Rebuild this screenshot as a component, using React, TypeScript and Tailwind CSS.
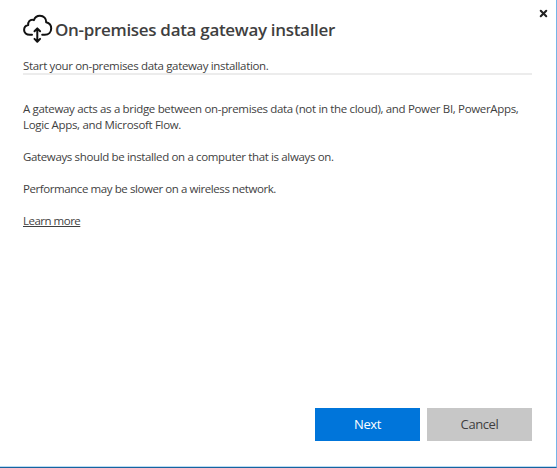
import { X } from 'lucide-react';

function CloudGatewayIcon() {
  return (
    <svg width="30" height="30" viewBox="0 0 30 30" fill="none" stroke="#111" strokeWidth="2" strokeLinecap="round" strokeLinejoin="round">
      <path d="M9 20.800H6.800C3.400 20.800 1.100 18.800 1.100 15.900c0-2.700 1.700-4.400 4.100-4.900C4.900 7.800 6.900 5.600 9.600 5.800c.5 0 .9.1 1.300.3C11.900 3.300 14.100 1.700 16.900 1.700c3.900 0 6.500 2.800 6.300 6.600 3.100.8 5 3 5 6.200 0 3.700-2.600 6.300-6.400 6.300h-2.600" />
      <path d="M14.300 14.500V27.500M11.500 17.200l2.800-2.800 2.800 2.800M11.500 24.900l2.800 2.800 2.800-2.800" />
    </svg>
  );
}

export default function App() {
  return (
    <div className="flex h-[468px] w-[557px] flex-col border-r border-b border-r-[#75b5e8] border-b-[#17639f] bg-white font-['Open_Sans','Noto_Sans',sans-serif] text-[#3f3f3f]">
      <div className="flex flex-1 flex-col border-b border-[#b9dcf3] pr-6 pl-[23px]">
        {/* Header */}
        <header className="flex h-[57px] items-start justify-between">
          <div className="flex pt-[14px]">
            <CloudGatewayIcon />
            <h1 className="ml-[2px] text-[17px] leading-[31px] font-semibold tracking-[-0.31px] whitespace-nowrap">
              On-premises data gateway installer
            </h1>
          </div>
          <button className="-mr-[17px] pt-2 text-[#222]" aria-label="Close">
            <X size={11} strokeWidth={4.5} />
          </button>
        </header>
        <p className="h-[18px] border-b-2 border-[#ececec] text-[11.5px] leading-[18px] tracking-[-0.34px] whitespace-nowrap">
          Start your on-premises data gateway installation.
        </p>

        {/* Content */}
        <main className="flex flex-1 flex-col gap-4 pt-[26px] text-[11.5px] leading-4 tracking-[-0.33px] whitespace-nowrap">
          <p>
            A gateway acts as a bridge between on-premises data (not in the cloud), and Power BI, PowerApps,
            <br />
            Logic Apps, and Microsoft Flow.
          </p>
          <p className="tracking-[-0.36px]">Gateways should be installed on a computer that is always on.</p>
          <p className="tracking-[-0.42px]">Performance may be slower on a wireless network.</p>
          <a className="self-start tracking-[-0.5px] underline decoration-1 underline-offset-1">Learn more</a>
        </main>

        {/* Actions */}
        <footer className="mb-[25px] flex justify-end gap-[7px] text-[13px] tracking-[-0.4px]">
          <button className="h-[33px] w-[105px] bg-[#0075da] text-white">Next</button>
          <button className="h-[33px] w-[105px] bg-[#c7c7c7]">Cancel</button>
        </footer>
      </div>
    </div>
  );
}
